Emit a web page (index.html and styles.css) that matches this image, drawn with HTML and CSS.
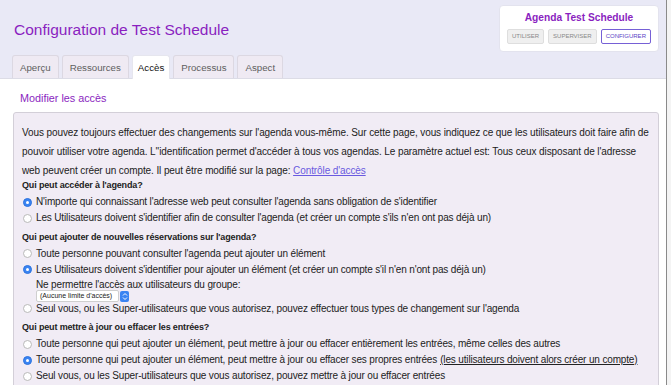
FILE: index.html
```html
<!DOCTYPE html>
<html lang="fr">
<head>
  <meta charset="UTF-8" />
  <title>Configuration de Test Schedule</title>
  <link rel="stylesheet" href="styles.css">
</head>
<body>
  <div class="page">
    <div class="header">
      <div class="header-left">
        <h1 class="title">Configuration de Test Schedule</h1>
        <div class="tabs">
          <span class="tab">Aperçu</span>
          <span class="tab">Ressources</span>
          <span class="tab active">Accès</span>
          <span class="tab">Processus</span>
          <span class="tab">Aspect</span>
        </div>
      </div>
      <div class="agenda-card">
        <div class="agenda-name">Agenda Test Schedule</div>
        <div class="modes">
          <span class="mode">UTILISER</span>
          <span class="mode">SUPERVISER</span>
          <span class="mode current">CONFIGURER</span>
        </div>
      </div>
    </div>

    <div class="content">
      <h2 class="section-title">Modifier les accès</h2>
      <div class="box">
        <p class="intro">Vous pouvez toujours effectuer des changements sur l'agenda vous-même. Sur cette page, vous indiquez ce que les utilisateurs doit faire afin de<br>pouvoir utiliser votre agenda. L''identification permet d'accéder à tous vos agendas. Le paramètre actuel est: Tous ceux disposant de l'adresse<br>web peuvent créer un compte. Il peut être modifié sur la page: <a href="#">Contrôle d'accès</a></p>

        <div class="question">Qui peut accéder à l'agenda?</div>
        <div class="option"><span class="radio on"></span>N'importe qui connaissant l'adresse web peut consulter l'agenda sans obligation de s'identifier</div>
        <div class="option"><span class="radio"></span>Les Utilisateurs doivent s'identifier afin de consulter l'agenda (et créer un compte s'ils n'en ont pas déjà un)</div>

        <div class="question">Qui peut ajouter de nouvelles réservations sur l'agenda?</div>
        <div class="option"><span class="radio"></span>Toute personne pouvant consulter l'agenda peut ajouter un élément</div>
        <div class="option"><span class="radio on"></span>Les Utilisateurs doivent s'identifier pour ajouter un élément (et créer un compte s'il n'en n'ont pas déjà un)</div>
        <div class="sub">
          <div class="sub-label">Ne permettre l'accès aux utilisateurs du groupe:</div>
          <span class="select"><span class="select-text">(Aucune limite d'accès)</span><span class="select-btn">
            <svg width="6" height="9" viewBox="0 0 6 9"><path d="M1 3.5 L3 1.5 L5 3.5 M1 5.5 L3 7.5 L5 5.5" fill="none" stroke="#fff" stroke-width="1"/></svg>
          </span></span>
        </div>
        <div class="option"><span class="radio"></span>Seul vous, ou les Super-utilisateurs que vous autorisez, pouvez effectuer tous types de changement sur l'agenda</div>

        <div class="question">Qui peut mettre à jour ou effacer les entrées?</div>
        <div class="option"><span class="radio"></span>Toute personne qui peut ajouter un élément, peut mettre à jour ou effacer entièrement les entrées, même celles des autres</div>
        <div class="option"><span class="radio on"></span>Toute personne qui peut ajouter un élément, peut mettre à jour ou effacer ses propres entrées <span class="note">(les utilisateurs doivent alors créer un compte)</span></div>
        <div class="option"><span class="radio"></span>Seul vous, ou les Super-utilisateurs que vous autorisez, pouvez mettre à jour ou effacer entrées</div>
      </div>
    </div>
  </div>
  <div class="scrollbar"></div>
</body>
</html>
```

FILE: styles.css
```css
body {
  margin: 0;
  padding: 0;
  overflow: hidden;
  background: #fff;
  font-family: 'Liberation Sans', Arial, sans-serif;
  color: #222;
  display: flex;
}

.page {
  width: 666px;
  flex: none;
}

.scrollbar {
  flex: 1;
  border-left: 1px solid #8a8a8a;
  background: #f4f4f4;
  height: 385px;
}

.header {
  display: flex;
  justify-content: space-between;
  background: #e9e9f6;
  border-bottom: 1px solid #dcdce6;
  height: 78px;
}

.header-left {
  display: flex;
  flex-direction: column;
  justify-content: flex-end;
  padding-left: 12px;
}

.title {
  margin: 0 0 16px 2px;
  font-size: 15.5px;
  line-height: 18px;
  font-weight: normal;
  color: #8a1fc0;
}

.tabs {
  display: flex;
  gap: 3px;
}

.tab {
  height: 22px;
  line-height: 23px;
  padding: 0 7px;
  font-size: 9.7px;
  color: #5e5e5e;
  background: #efeaf3;
  border: 1px solid #dcd8e2;
  border-bottom: none;
  border-radius: 3px 3px 0 0;
}

.tab.active {
  background: #fff;
  color: #111;
  height: 23px;
  padding: 0 5px;
  margin-bottom: -1px;
  border-color: #e6e6ee;
}

.agenda-card {
  margin: 5px 7px 0 0;
  width: 160px;
  height: 47px;
  background: #fff;
  border: 1px solid #e3e3ee;
  border-radius: 4px;
  text-align: center;
  box-sizing: border-box;
}

.agenda-name {
  margin-top: 5px;
  font-size: 10.2px;
  line-height: 13px;
  font-weight: bold;
  color: #8a1fc0;
}

.modes {
  display: flex;
  justify-content: center;
  gap: 4px;
  margin-top: 5px;
}

.mode {
  font-size: 6px;
  height: 13px;
  line-height: 13px;
  padding: 0 4px;
  color: #888;
  background: #efefef;
  border: 1px solid #dedede;
  border-radius: 2px;
}

.mode.current {
  background: #fff;
  color: #5a3fc6;
  border-color: #7660d6;
}

.content {
  padding: 0 7px 0 13px;
}

.section-title {
  margin: 12px 0 7px 7px;
  font-size: 10.8px;
  line-height: 14px;
  font-weight: normal;
  color: #8a1fc0;
}

.box {
  background: #f1ecf5;
  border: 1px solid #d3cfd8;
  border-radius: 3px;
  padding: 10px 4px 20px 8px;
  font-size: 10px;
}

.intro {
  margin: 0;
  line-height: 19px;
  letter-spacing: -0.1px;
  white-space: nowrap;
}

.intro a {
  color: #6a5ae0;
}

.question {
  font-weight: bold;
  font-size: 9px;
  letter-spacing: -0.15px;
  line-height: 16px;
  margin: 2.5px 0 1px 0;
}

.intro + .question {
  margin-top: -3px;
}

.option {
  display: flex;
  align-items: center;
  line-height: 16px;
  letter-spacing: -0.15px;
}

.radio {
  width: 7px;
  height: 7px;
  border: 1px solid #b9b9b9;
  border-radius: 50%;
  background: #fff;
  margin: 0 4px 0 1px;
  flex: none;
  position: relative;
}

.radio.on {
  background: #3a84f2;
  border-color: #2d73de;
}

.radio.on::after {
  content: '';
  position: absolute;
  left: 2px;
  top: 2px;
  width: 3px;
  height: 3px;
  border-radius: 50%;
  background: #fff;
}

.sub {
  padding-left: 14px;
  letter-spacing: -0.15px;
}

.sub-label {
  line-height: 14px;
}

.select {
  display: flex;
  align-items: center;
  margin: -1px 0 -1px 0;
  height: 11px;
}

.select-text {
  font-size: 7px;
  letter-spacing: 0;
  height: 10px;
  line-height: 10px;
  width: 75px;
  padding: 0 3px;
  background: #fff;
  border: 1px solid #cfcfcf;
  border-radius: 2px;
}

.select-btn {
  display: flex;
  align-items: center;
  justify-content: center;
  width: 9px;
  height: 11px;
  margin-left: 1px;
  background: #3a84f2;
  border-radius: 2px;
}

.note {
  text-decoration: underline;
  margin-left: 3px;
}
```
